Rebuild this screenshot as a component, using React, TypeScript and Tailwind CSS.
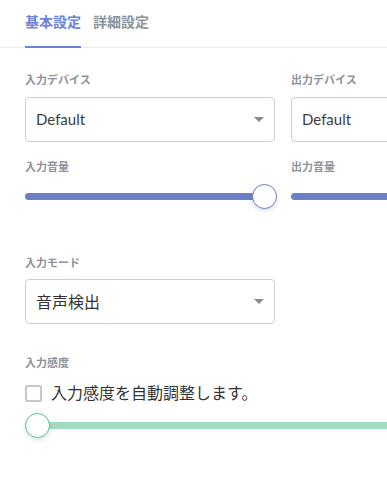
const font = "font-['Lato','Noto_Sans_CJK_JP',sans-serif]";

function Label({ children }: { children: React.ReactNode }) {
  return (
    <div className="h-4 text-[11px] leading-4 font-bold text-[#8d9199]">
      {children}
    </div>
  );
}

function Select({ value, jp }: { value: string; jp?: boolean }) {
  return (
    <div className="flex h-[45px] w-[250px] items-center justify-between rounded-[4px] border border-[#cfcfcf] bg-white pl-[10px] pr-[10px]">
      <span className={jp ? "text-[16px] text-[#333]" : "text-[15px] text-[#3d3d3d]"}>{value}</span>
      <span className="border-l-[5px] border-r-[5px] border-t-[5px] border-l-transparent border-r-transparent border-t-[#8a8a8a]" />
    </div>
  );
}

function Slider({ value, color, border, width }: { value: number; color: string; border: string; width: number }) {
  return (
    <div className="relative h-[25px]" style={{ width }}>
      <div
        className="absolute left-0 top-[9px] h-[7px] rounded-full"
        style={{ background: color, right: value === 1 ? 12 : 0 }}
      />
      <div
        className="absolute top-0 h-[25px] w-[25px] rounded-full border-[1.5px] bg-white shadow-[0_2px_4px_rgba(0,0,0,0.12)]"
        style={{ left: value * (width - 25), borderColor: border }}
      />
    </div>
  );
}

export default function App() {
  return (
    <div className={`${font} w-full overflow-hidden bg-white`}>
      <div className="flex h-12 gap-3 border-b border-[#ebebeb] pl-[25px]">
        <div className="-mb-px h-12 border-b-2 border-[#6d83d8] pt-[12px] text-[14px] font-bold leading-5 text-[#6d83d8]">
          基本設定
        </div>
        <div className="pt-[12px] text-[14px] font-bold leading-5 text-[#8d9199]">
          詳細設定
        </div>
      </div>

      <div className="pl-[25px]">
        <div className="mt-[24px] flex w-[600px] gap-4">
          <div className="w-[250px] shrink-0">
            <Label>入力デバイス</Label>
            <div className="mt-[9px]">
              <Select value="Default" />
            </div>
            <div className="mt-[17px]">
              <Label>入力音量</Label>
              <div className="mt-[9px]">
                <Slider value={1} color="#6b7fc6" border="#6b7fc6" width={252} />
              </div>
            </div>
          </div>
          <div className="w-[250px] shrink-0">
            <Label>出力デバイス</Label>
            <div className="mt-[9px]">
              <Select value="Default" />
            </div>
            <div className="mt-[17px]">
              <Label>出力音量</Label>
              <div className="mt-[9px]">
                <Slider value={1} color="#6b7fc6" border="#6b7fc6" width={252} />
              </div>
            </div>
          </div>
        </div>

        <div className="mt-[46px]">
          <Label>入力モード</Label>
          <div className="mt-[8px]">
            <Select value="音声検出" jp />
          </div>
        </div>

        <div className="mt-[31px]">
          <Label>入力感度</Label>
          <label className="mt-[11px] flex h-[22px] items-center gap-[9px]">
            <span className="h-[17px] w-[17px] shrink-0 rounded-[2px] border-2 border-[#c8c8c8] bg-white" />
            <span className="text-[16px] text-[#333]">入力感度を自動調整します。</span>
          </label>
          <div className="mt-[9px]">
            <Slider value={0} color="#a3dbc2" border="#5fc195" width={520} />
          </div>
        </div>
        <div className="h-[40px]" />
      </div>
    </div>
  );
}
